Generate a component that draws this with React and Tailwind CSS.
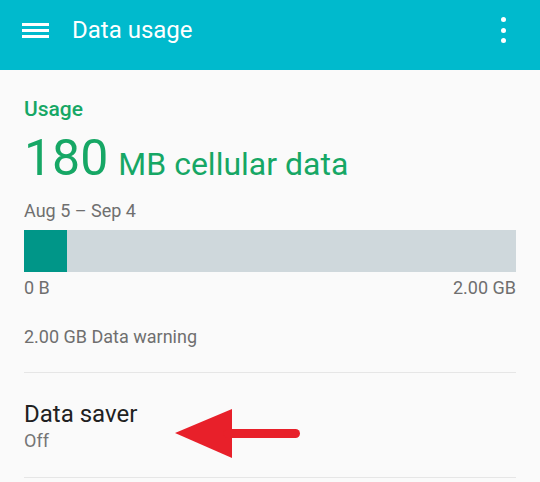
import React from "react";

const usage = { used: 180, limit: 2000 };

const Header = () => (
  <header className="h-[70px] bg-[#00bacd] flex items-center pb-[10px] px-[22px]">
    <div className="flex flex-col gap-[3px] w-[27px]">
      <span className="h-[3px] bg-white" />
      <span className="h-[3px] bg-white" />
      <span className="h-[3px] bg-white" />
    </div>
    <h1 className="ml-[23px] text-[24px] leading-[30px] text-white">Data usage</h1>
    <div className="ml-auto mr-[12px] flex flex-col gap-[5.5px]">
      <span className="w-[5px] h-[5px] rounded-full bg-white" />
      <span className="w-[5px] h-[5px] rounded-full bg-white" />
      <span className="w-[5px] h-[5px] rounded-full bg-white" />
    </div>
  </header>
);

const Arrow = () => (
  <svg
    className="absolute left-[170px] top-[400px]"
    width="140"
    height="65"
    viewBox="0 0 140 65"
  >
    <polygon points="5,33 62,9 62,58" fill="#e8202a" />
    <line x1="58" y1="33.5" x2="125.5" y2="33.5" stroke="#e8202a" strokeWidth="9" strokeLinecap="round" />
  </svg>
);

export default function App() {
  const pct = (usage.used / usage.limit) * 100;

  return (
    <div className="relative w-[540px] h-[482px] overflow-hidden bg-[#fafafa] font-['Roboto',sans-serif]">
      <Header />
      <main className="px-6">
        <p className="pt-[27px] text-[21px] leading-[24px] font-medium text-[#16a765]">Usage</p>
        <div className="mt-[12px] flex items-baseline text-[#16a765]">
          <span className="text-[50px] leading-[50px]">{usage.used}</span>
          <span className="ml-[10px] text-[32px] leading-[32px]">MB cellular data</span>
        </div>
        <p className="mt-[18px] text-[18px] leading-[20px] text-[#6f6f6f]">Aug 5 – Sep 4</p>
        <div className="mt-[9px] h-[42px] bg-[#cfd8dc]">
          <div className="h-full bg-[#009688]" style={{ width: `${pct * 0.97}%` }} />
        </div>
        <div className="mt-[6px] flex justify-between text-[18px] leading-[20px] text-[#6f6f6f]">
          <span>0 B</span>
          <span>2.00 GB</span>
        </div>
        <p className="mt-[29px] text-[18px] leading-[20px] text-[#6f6f6f]">2.00 GB Data warning</p>
        <div className="mt-[25px] h-px bg-[#e6e6e6]" />
        <p className="mt-[27px] text-[24px] leading-[28px] text-[#212121]">Data saver</p>
        <p className="mt-[3px] text-[18px] leading-[20px] text-[#757575]">Off</p>
        <div className="mt-[26px] h-px bg-[#e6e6e6]" />
      </main>
      <Arrow />
    </div>
  );
}
